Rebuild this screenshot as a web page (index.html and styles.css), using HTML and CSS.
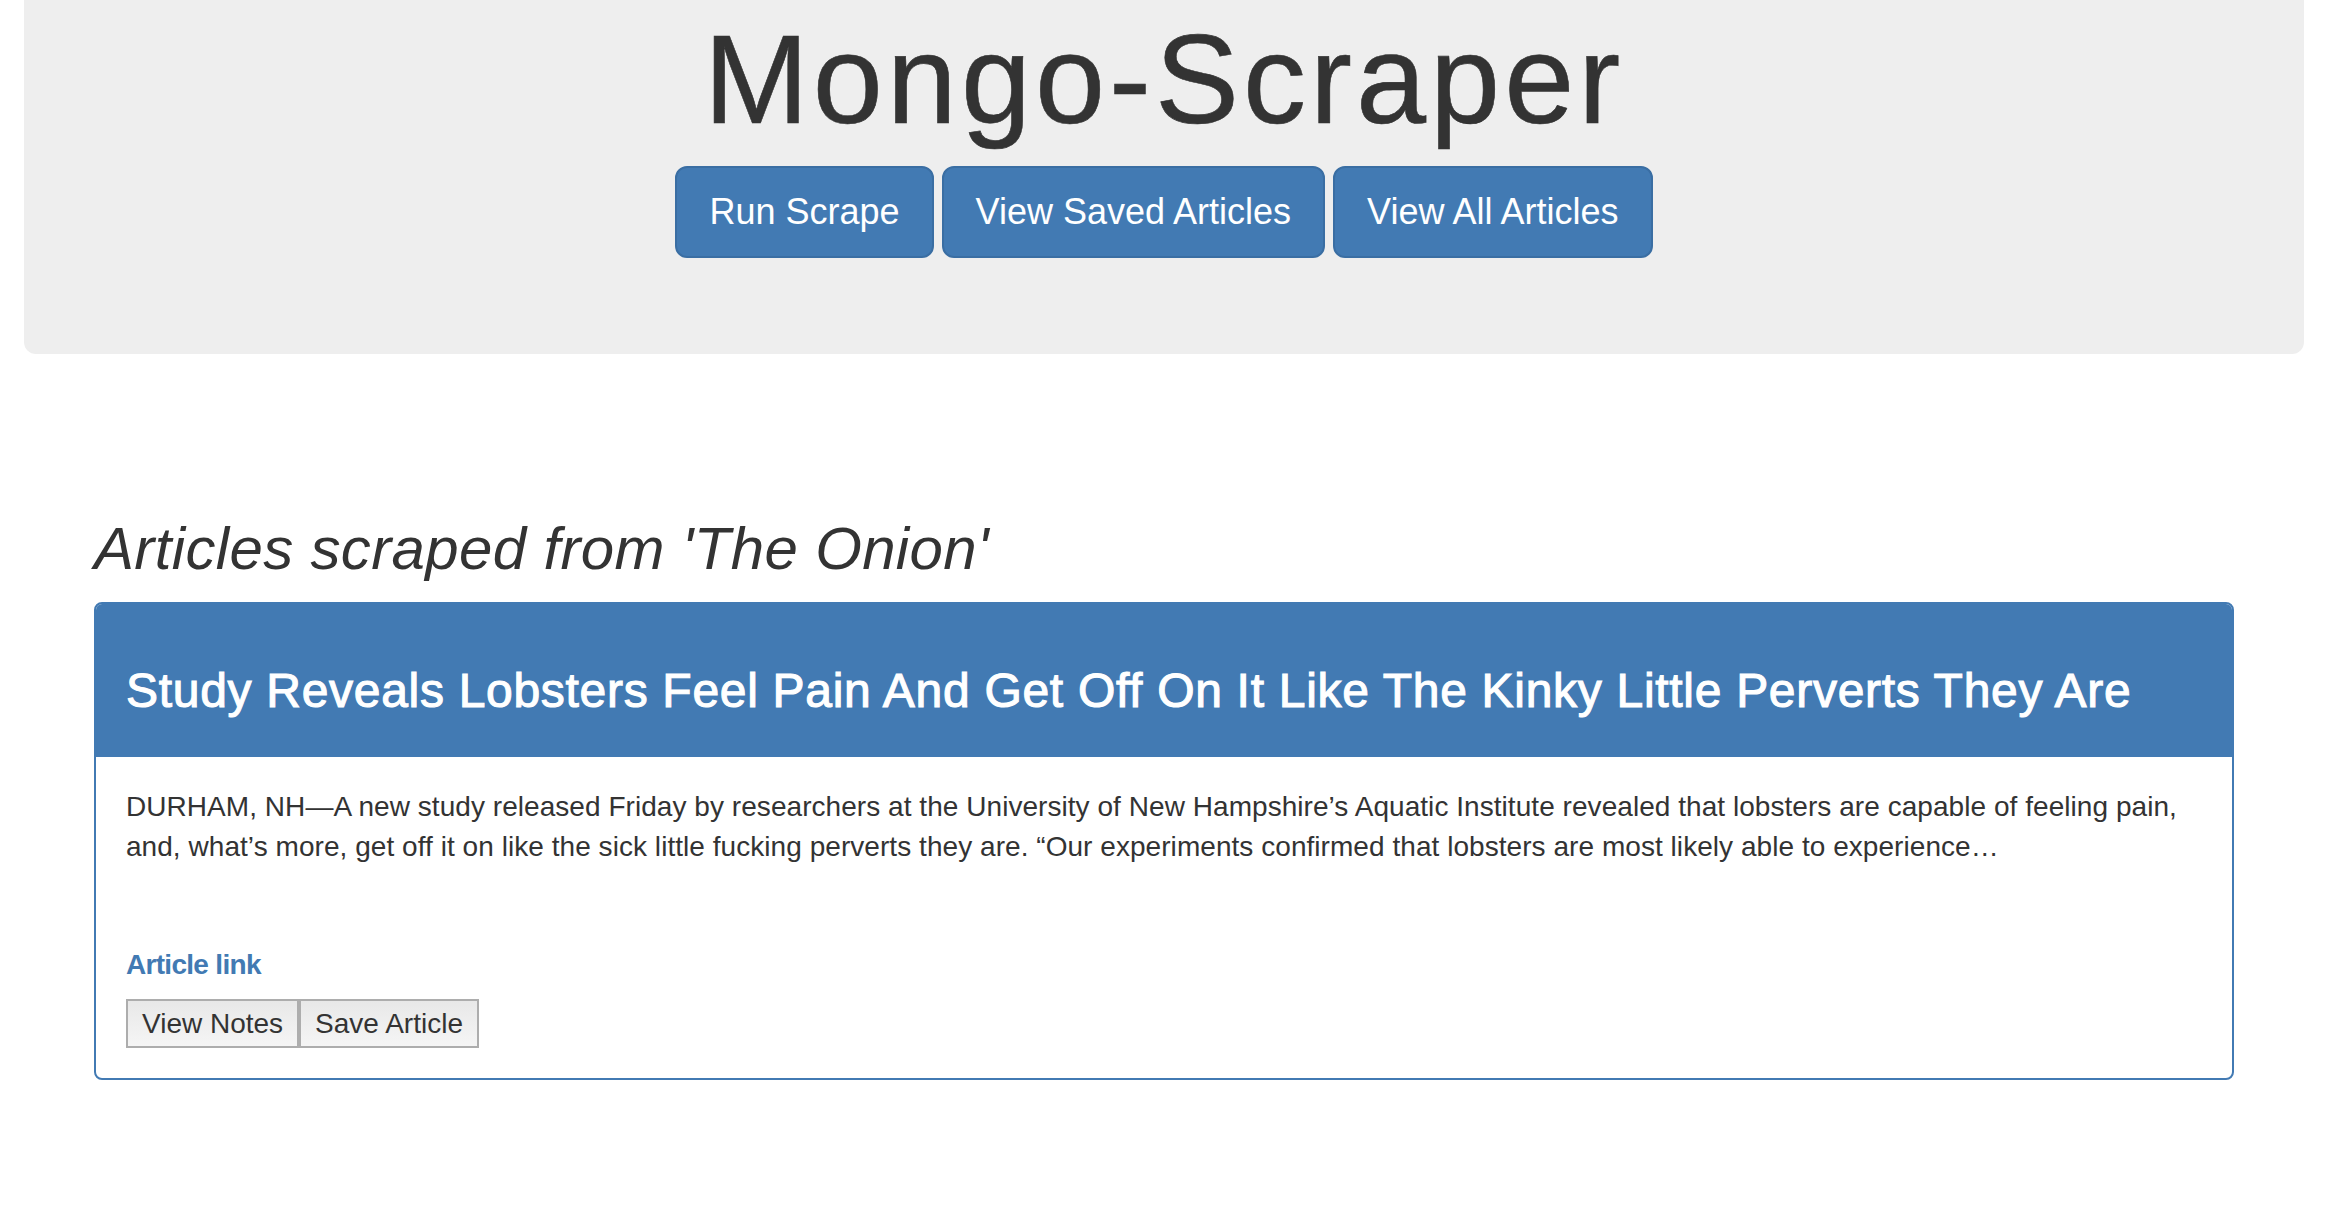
FILE: index.html
```html
<!DOCTYPE html>
<html lang="en">
<head>
<meta charset="utf-8">
<title>Mongo-Scraper</title>
<link rel="stylesheet" href="styles.css">
</head>
<body>
<header class="jumbotron">
  <h1 class="site-title">Mongo-Scraper</h1>
  <nav class="btn-row">
    <a class="btn-primary" href="#">Run Scrape</a>
    <a class="btn-primary" href="#">View Saved Articles</a>
    <a class="btn-primary" href="#">View All Articles</a>
  </nav>
</header>
<main class="content">
  <h2 class="section-title">Articles scraped from 'The Onion'</h2>
  <article class="panel">
    <div class="panel-heading">
      <h3 class="panel-title">Study Reveals Lobsters Feel Pain And Get Off On It Like The Kinky Little Perverts They Are</h3>
    </div>
    <div class="panel-body">
      <p class="summary">DURHAM, NH—A new study released Friday by researchers at the University of New Hampshire’s Aquatic Institute revealed that lobsters are capable of feeling pain,<br>and, what’s more, get off it on like the sick little fucking perverts they are. “Our experiments confirmed that lobsters are most likely able to experience…</p>
      <a class="article-link" href="#">Article link</a>
      <div class="actions">
        <button class="btn-plain" type="button">View Notes</button><button class="btn-plain" type="button">Save Article</button>
      </div>
    </div>
  </article>
</main>
</body>
</html>
```

FILE: styles.css
```css
html, body {
  margin: 0;
  padding: 0;
  background: #ffffff;
}

body {
  font-family: "Liberation Sans", Arial, sans-serif;
  color: #333333;
  font-size: 28px;
  line-height: 40px;
}

.jumbotron {
  margin: 0 28px 0 24px;
  padding: 10px 0 96px;
  background: #eeeeee;
  border-radius: 0 0 12px 12px;
  text-align: center;
}

.site-title {
  margin: 0 0 17px;
  font-size: 126px;
  line-height: 139px;
  font-weight: normal;
  letter-spacing: 4px;
  color: #333333;
  -webkit-text-stroke: 0.6px #333333;
}

.btn-row {
  display: flex;
  justify-content: center;
  gap: 8px;
}

.btn-primary {
  display: inline-block;
  padding: 20px 32px;
  font-size: 36px;
  line-height: 48px;
  color: #ffffff;
  background: #427ab3;
  border: 2px solid #3a6ea3;
  border-radius: 12px;
  text-decoration: none;
}

.content {
  padding: 0 98px 0 94px;
}

.section-title {
  margin: 162px 0 20px;
  font-size: 60px;
  line-height: 66px;
  font-style: italic;
  font-weight: normal;
  letter-spacing: 0.35px;
  color: #333333;
}

.panel {
  border: 2px solid #427ab3;
  border-radius: 8px;
  overflow: hidden;
}

.panel-heading {
  background: #427ab3;
  padding: 60px 30px 40px;
}

.panel-title {
  margin: 0;
  font-size: 48px;
  line-height: 53px;
  font-weight: normal;
  color: #ffffff;
  -webkit-text-stroke: 1.1px #ffffff;
  letter-spacing: 0.7px;
  white-space: nowrap;
}

.panel-body {
  padding: 30px;
}

.summary {
  margin: 0 0 78px;
  font-size: 28px;
  line-height: 40px;
  letter-spacing: 0.05px;
  color: #333333;
}

.article-link {
  display: block;
  width: max-content;
  font-weight: bold;
  letter-spacing: -0.7px;
  color: #427ab3;
  text-decoration: none;
  line-height: 40px;
}

.actions {
  display: flex;
  margin-top: 14px;
}

.btn-plain {
  font-family: "Liberation Sans", Arial, sans-serif;
  font-size: 28px;
  line-height: 32px;
  padding: 6.5px 14px;
  color: #333333;
  background: linear-gradient(#e8e8e8, #f5f5f5);
  border: 2px solid #adadad;
  border-radius: 0;
  margin: 0;
}
```
